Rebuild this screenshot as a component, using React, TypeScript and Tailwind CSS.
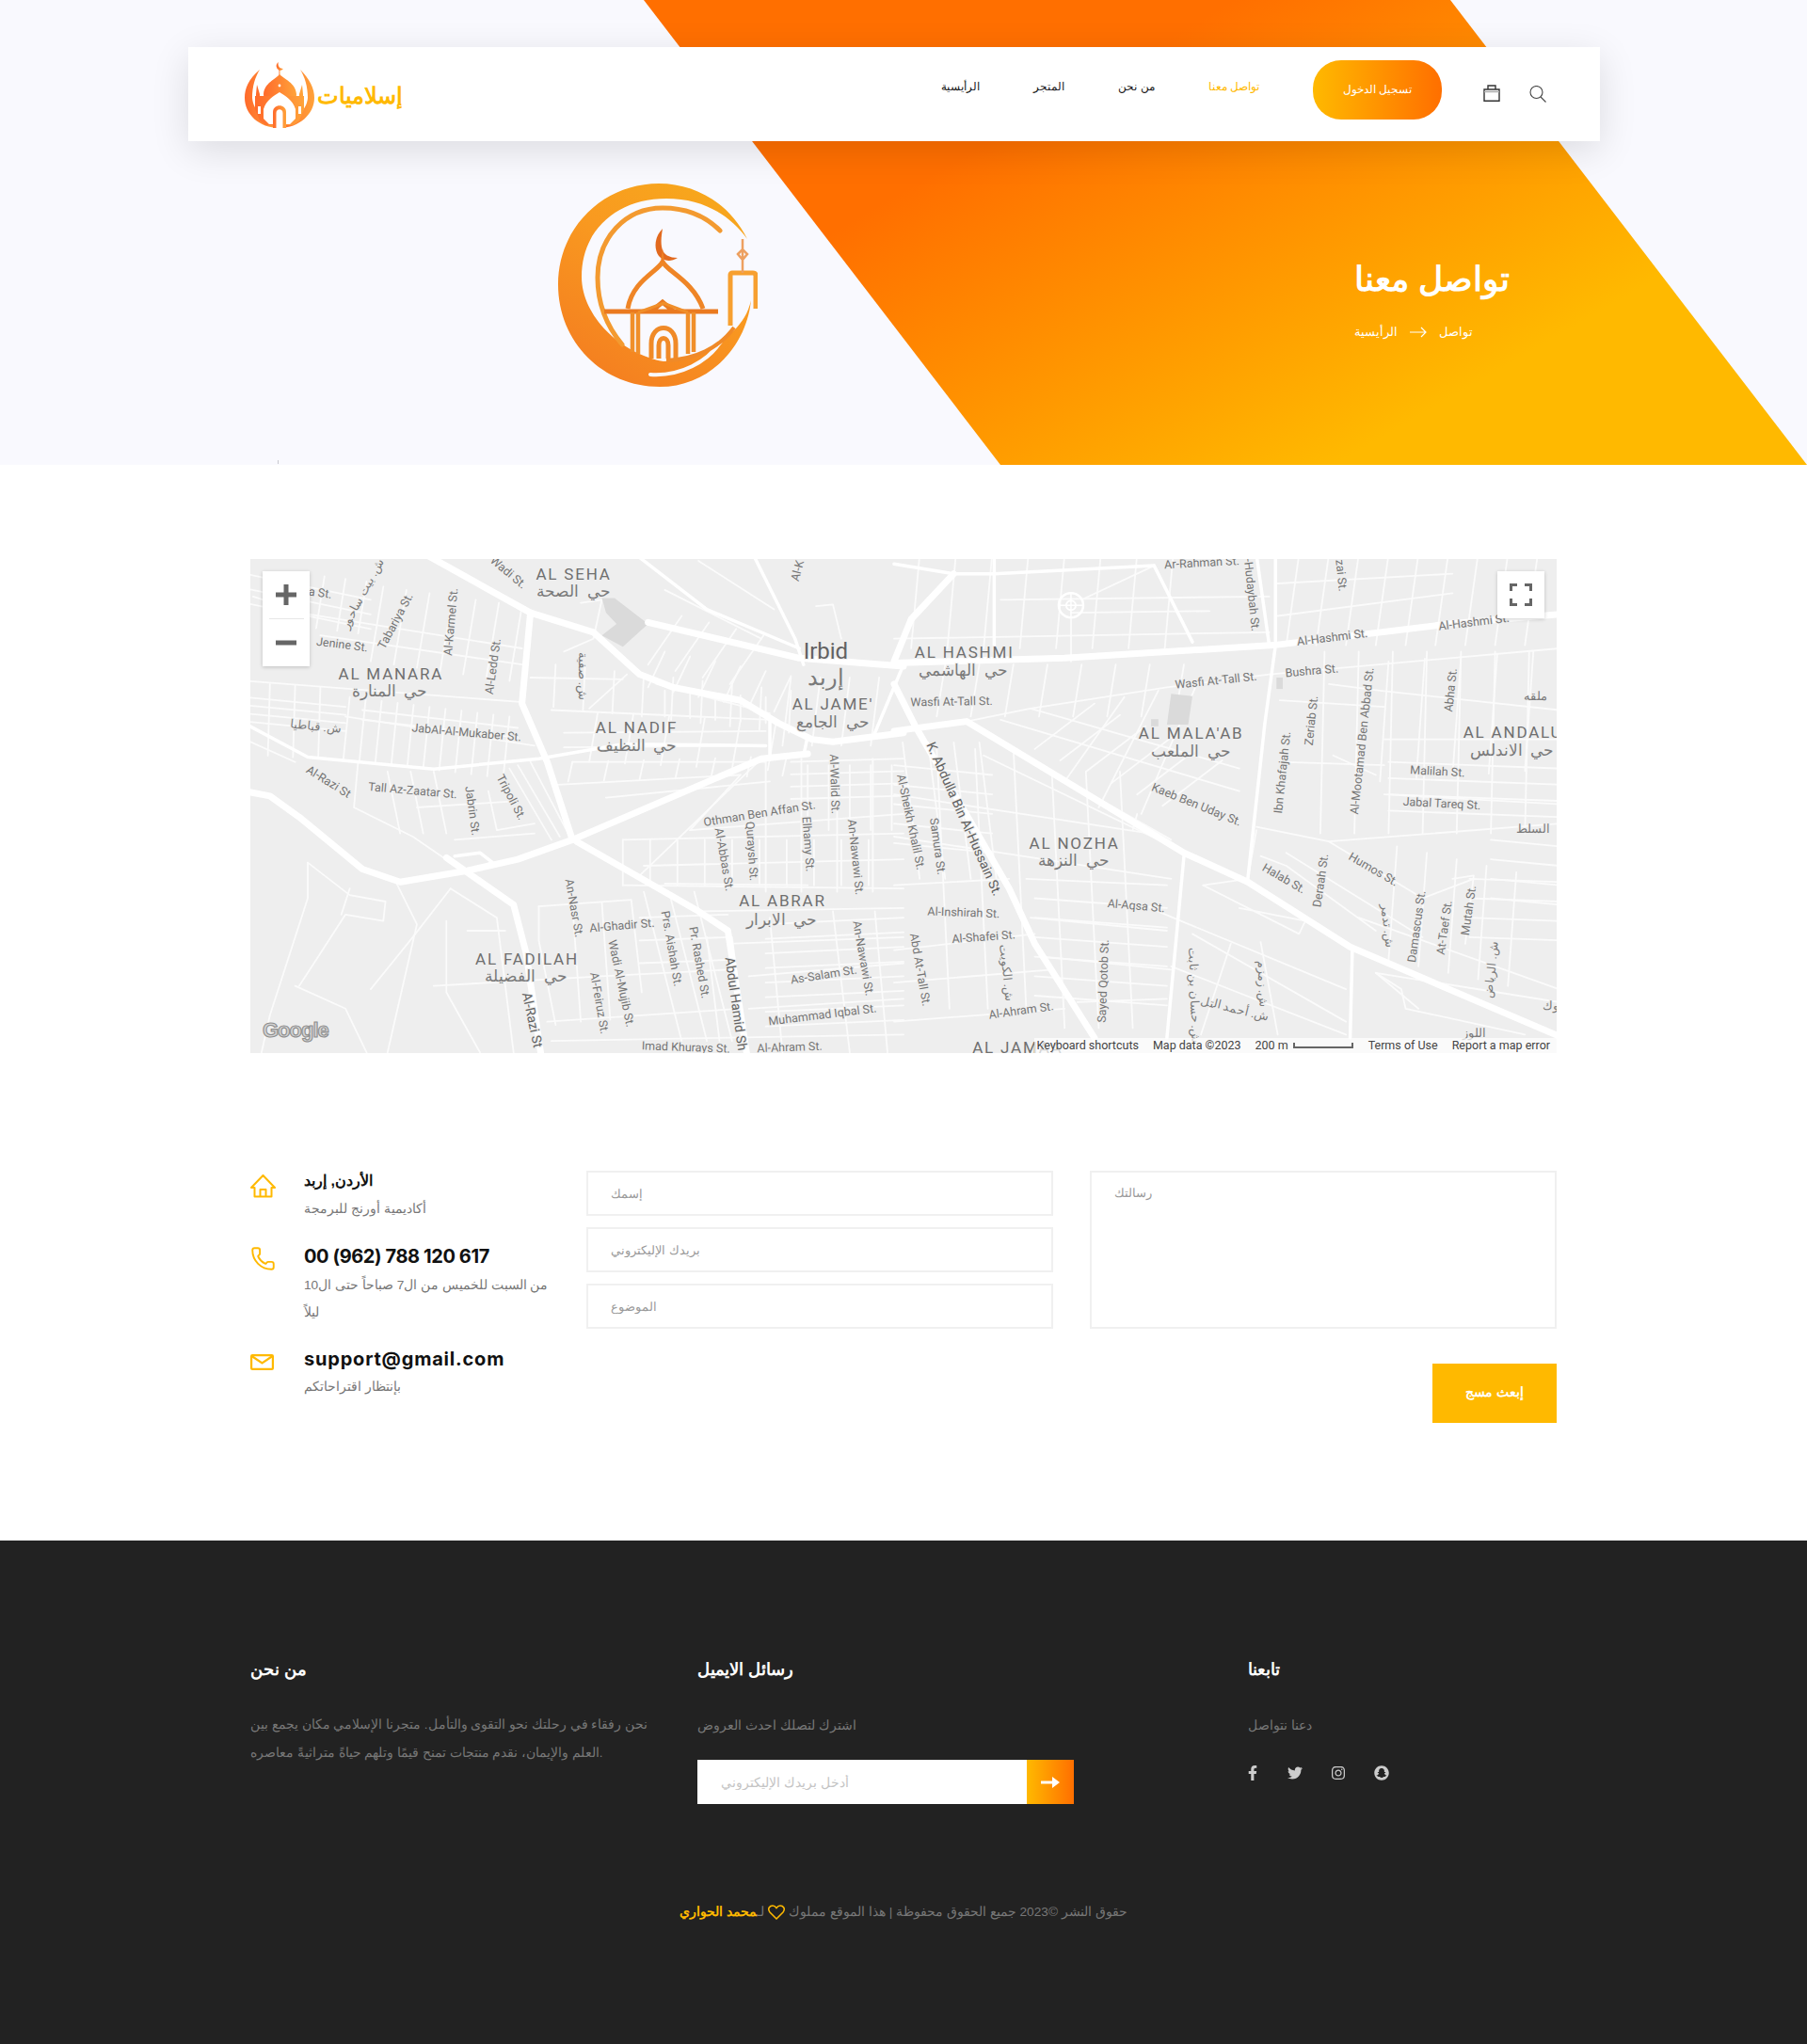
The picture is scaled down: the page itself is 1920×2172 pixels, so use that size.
import { Phone } from "lucide-react";
import { FaFacebookF, FaInstagram, FaSnapchat, FaTwitter } from "react-icons/fa";

type Conv = (x: number, y: number) => number[];

// the map is drawn from measurements taken on two crops, so keep a converter for each
const z3: Conv = (x, y) => [x / 2.24 - 6, y / 2.9 - 5];
const z4: Conv = (x, y) => [x / 2.208 + 684, y / 2.9 - 5];

const toPts = (s: string, f: Conv) =>
  s
    .split(" ")
    .map((p) => {
      const [x, y] = p.split(",").map(Number);
      return f(x, y)
        .map((n) => n.toFixed(1))
        .join(",");
    })
    .join(" ");

// n parallel streets
const hatch = (x0: number, y0: number, x1: number, y1: number, dx: number, dy: number, n: number) =>
  Array.from({ length: n }, (_, i) => `${x0 + dx * i},${y0 + dy * i} ${x1 + dx * i},${y1 + dy * i}`);

const MAJOR_3 = [
  "430,0 680,180 830,240 940,370 1020,410 1180,450 1270,520 1350,570 1400,578 1568,550",
  "680,180 660,460 720,640 780,880 1230,630 1340,615",
  "780,880 650,940 530,975 370,1010 280,970 130,810 60,745 0,730",
  "790,885 1080,1100 1150,1160 1195,1540",
  "480,935 640,1080 670,1230 705,1540",
  "960,210 1320,320 1568,345",
];
const MEDIUM_3 = [
  "1210,0 1310,260 1330,340",
  "930,0 1100,170 1320,290",
  "1340,560 1330,620",
  "1568,340 1500,550",
  "13,530 150,625 450,662 700,630 900,585 1240,590",
  "1250,500 1250,620",
  "500,930 560,920 590,950 540,975",
];
const MINOR_3 = [
  "0,390 655,455",
  "130,180 660,290",
  "180,250 660,340",
  "20,130 140,180",
  "240,500 690,590",
  "680,380 900,385",
  "730,480 1250,510",
  "780,640 1240,640",
  "745,710 1180,680",
  "860,750 1250,700",
  "900,1020 1568,1030",
  "1060,850 1568,800",
  "900,880 1568,860",
  "950,960 1568,940",
  "1000,1015 1340,1020",
  "1090,1100 1568,1090",
  "1150,1200 1568,1180",
  "1200,1300 1568,1260",
  "1200,1400 1568,1370",
  "700,1085 920,1065 945,1350",
  "700,1085 700,1190 740,1450",
  "720,1440 1180,1400",
  "450,1330 850,1300 1150,1280",
  "730,1500 1568,1480",
  "940,990 1230,630",
  "1060,850 1180,680",
  "360,1010 410,1140 340,1535",
  "150,950 250,1050 335,1070 330,1130 240,1110 130,1330",
  "150,950 150,1060 60,1420 40,1535",
  "120,1330 240,1400 290,1535",
  "250,1030 230,1110",
  "490,1030 400,1180 300,1340",
  "490,1030 600,1120 640,1535",
  "530,1160 620,1160",
  "480,1130 480,1350 560,1535",
  "910,370 820,475",
  "1250,1120 1280,1535",
  "1400,1100 1440,1535",
  "1500,1100 1530,1535",
  "0,570 120,640",
  "270,640 260,780 400,870 490,950",
  "580,730 600,850 690,830",
  "500,880 690,860",
  "410,780 650,760",
  "630,660 730,880",
  "650,650 750,870",
  "680,640 770,860",
  "1360,160 1400,155 1420,260",
  "980,400 1250,490",
  "760,300 830,260 850,140 800,150",
  "1000,110 1230,260",
  "1080,20 1260,170",
  ...hatch(0, 60, 300, 140, 0, 45, 3),
  ...hatch(280, 480, 650, 535, 0, 30, 2),
  ...hatch(0, 440, 240, 470, 0, 25, 4),
  ...hatch(140, 60, 120, 220, 50, 8, 4),
  ...hatch(330, 100, 300, 330, 55, 10, 7),
  ...hatch(250, 440, 235, 630, 38, 6, 11),
  ...hatch(60, 400, 55, 620, 60, 5, 3),
  ...hatch(740, 340, 735, 470, 70, 10, 9),
  ...hatch(840, 490, 820, 640, 85, 5, 6),
  ...hatch(780, 640, 770, 700, 85, -3, 7),
  ...hatch(340, 670, 370, 860, 55, 0, 3),
  ...hatch(900, 880, 900, 1020, 65, 0, 10),
  ...hatch(1300, 380, 1280, 590, 70, 0, 4),
  ...hatch(1040, 190, 960, 340, 65, 20, 4),
  ...hatch(1000, 420, 1000, 500, 60, 5, 5),
  ...hatch(780, 1080, 800, 1440, 70, -6, 2),
  ...hatch(950, 1040, 1040, 1500, 60, 0, 3),
  ...hatch(1240, 630, 1240, 1040, 85, 0, 4),
  ...hatch(1240, 1140, 1568, 1120, 0, 45, 8),
  ...hatch(1300, 640, 1568, 630, 0, 38, 4),
  ...hatch(760, 550, 1240, 545, 0, 45, 2),
  ...hatch(1000, 300, 960, 410, 60, 15, 6),
  ...hatch(1340, 650, 1340, 850, 50, 0, 5),
  ...hatch(1100, 1180, 1130, 1500, 60, 0, 2),
  ...hatch(940, 1120, 1150, 1110, 0, 70, 3),
];
const MAJOR_4 = [
  "0,335 400,320 890,280 1300,215 1560,185",
  "0,545 170,515 680,920 830,1010 1070,1210 1560,1485",
  "0,400 50,530 270,1030 330,1200 470,1490",
  "140,60 40,200 0,330",
];
const MEDIUM_4 = [
  "895,0 895,280 870,520 830,1000",
  "680,930 640,1490",
  "1075,1220 1070,1490",
  "235,0 235,300",
  "0,30 140,60 235,60 610,35",
  "610,35 700,270",
  "880,280 850,0",
];
const MINOR_4 = [
  "170,515 320,475 640,410 880,370 1560,290",
  "320,475 810,660",
  "250,510 810,730",
  "830,1000 725,1020",
  "850,840 1020,885 1240,1060 1360,1000",
  "1020,885 1560,830",
  "920,920 1240,1180",
  "860,930 920,960 1130,1160",
  "725,1020 950,1170 965,1130 810,1090",
  "600,1090 1060,1340",
  "700,1170 1060,1440",
  "650,1270 1060,1480",
  "790,1200 720,1480",
  "860,1195 900,1480",
  "1130,1290 1230,1400",
  "1130,1290 1190,1340 1200,1400 1480,1480",
  "610,35 440,140",
  "415,200 415,330",
  "415,180 740,175",
  "0,260 880,240",
  "250,140 880,130",
  "900,190 1310,120",
  "900,90 1310,60",
  "560,850 570,800",
  "540,440 400,700",
  "620,420 480,780",
  "710,400 580,800",
  "830,1000 850,850",
  "1150,570 1560,570",
  "1150,740 1560,770",
  "1020,400 1140,420 1560,480",
  "1030,620 1130,680",
  "1310,1000 1360,990 1340,1200",
  "0,870 250,920 650,1000",
  "0,740 300,800 600,860",
  "310,1000 640,1020",
  "320,1120 640,1160",
  "350,1240 650,1280",
  "0,1020 270,1000",
  "0,1220 330,1170",
  "0,1320 370,1280",
  "0,1440 400,1400",
  "430,1380 640,1370",
  "210,620 810,1000",
  "300,620 650,880",
  "905,450 1150,470",
  "905,640 1150,650",
  "1130,1290 1560,1380",
  "1090,1120 1560,1340",
  ...hatch(60, 0, 40, 290, 85, 0, 8),
  ...hatch(950, 0, 920, 280, 70, 0, 9),
  ...hatch(1010, 300, 1000, 860, 80, 0, 7),
  ...hatch(100, 600, 130, 1400, 90, 0, 3),
  ...hatch(370, 670, 400, 1460, 80, 0, 3),
  ...hatch(120, 340, 100, 500, 80, 0, 8),
  ...hatch(1180, 900, 1160, 1250, 70, 20, 5),
  ...hatch(1160, 640, 1560, 660, 0, 50, 4),
  ...hatch(1400, 880, 1560, 900, 0, 60, 4),
  ...hatch(1160, 330, 1140, 700, 85, -8, 5),
  ...hatch(20, 580, 60, 1000, 60, 0, 4),
  ...hatch(0, 650, 230, 680, 0, 60, 5),
  ...hatch(330, 1060, 640, 1090, 0, 60, 6),
  ...hatch(1350, 1000, 1560, 1010, 0, 60, 4),
  ...hatch(330, 600, 470, 460, 60, 35, 6),
];

type Label = [string, number, number, number?];

const AREAS_3: Label[] = [
  ["AL SEHA", 783, 60],
  ["حي  الصحة", 783, 112],
  ["AL MANARA", 348, 367],
  ["حي  المنارة", 345, 420],
  ["AL NADIF", 933, 533],
  ["حي  النظيف", 933, 588],
  ["AL JAME'", 1400, 462],
  ["حي  الجامع", 1400, 515],
  ["AL ABRAR", 1280, 1068],
  ["حي  الابرار", 1278, 1125],
  ["AL FADILAH", 672, 1248],
  ["حي  الفضيلة", 670, 1300],
];
const AREAS_4: Label[] = [
  ["AL HASHMI", 165, 303],
  ["حي  الهاشمي", 162, 357],
  ["AL MALA'AB", 697, 552],
  ["حي  الملعب", 697, 605],
  ["AL ANDALUS", 1465, 547],
  ["حي  الاندلس", 1450, 603],
  ["AL NOZHA", 423, 890],
  ["حي  النزهة", 422, 942],
  ["AL JAMAA", 290, 1520],
];
const STREETS_3: Label[] = [
  ["Wadi St.", 628, 55, 40],
  ["a St.", 180, 118, 8],
  ["ش. بيت ساحور", 280, 120, -62],
  ["Tabariya St.", 358, 205, -62],
  ["Al-Karmel St.", 490, 208, -85],
  ["Al-Ledd St.", 590, 345, -82],
  ["Jenine St.", 232, 277, 7],
  ["ش. صفية", 805, 375, 90],
  ["JabAl-Al-Mukaber St.", 528, 548, 5],
  ["ش. قباطيا", 170, 530, 6],
  ["Al-Razi St", 200, 700, 32],
  ["Tall Az-Zaatar St.", 400, 727, 5],
  ["Jabrin St.", 543, 790, 82],
  ["Tripoli St.", 635, 748, 62],
  ["Othman Ben Affan St.", 1225, 798, -9],
  ["Al-Abbas St.", 1142, 940, 80],
  ["Quraysh St.", 1208, 915, 86],
  ["Elhamy St.", 1342, 893, 86],
  ["Al-Walid St.", 1405, 708, 88],
  ["An-Nawawi St.", 1455, 933, 84],
  ["An-Nasr St.", 785, 1090, 80],
  ["Al-Ghadir St.", 898, 1143, -5],
  ["Wadi Al-Mujib St.", 897, 1322, 78],
  ["Al-Feiruz St.", 845, 1383, 80],
  ["Prs. Aishah St.", 1017, 1215, 80],
  ["Pr. Rashed St.", 1083, 1258, 80],
  ["As-Salam St.", 1378, 1295, -9],
  ["An-Nawawi St.", 1473, 1245, 80],
  ["Muhammad Iqbal St.", 1375, 1418, -7],
  ["Imad Khurays St.", 1050, 1518, 2],
  ["Al-Ahram St.", 1297, 1518, -2],
  ["Al-K", 1315, 50, -75],
];
const STREETS_4: Label[] = [
  ["Ar-Rahman St.", 722, 25, -3],
  ["-Hudaybah St.", 840, 125, 84],
  ["zai St.", 1050, 65, 84],
  ["Al-Hashmi St.", 1028, 255, -7],
  ["Al-Hashmi St.", 1360, 208, -7],
  ["Bushra St.", 980, 358, -5],
  ["Wasfi At-Tall St.", 755, 388, -6],
  ["Wasfi At-Tall St.", 135, 453, -1],
  ["Al-Mootamad Ben Abbad St.", 1097, 575, -84],
  ["Abha St.", 1305, 418, -84],
  ["ملقه", 1505, 437],
  ["Zeriab St.", 978, 512, -84],
  ["Ibn Khafajah St.", 910, 672, -84],
  ["Malilah St.", 1275, 668, 3],
  ["Jabal Tareq St.", 1285, 767, 3],
  ["Kaeb Ben Uday St.", 710, 770, 22],
  ["السلط", 1500, 845],
  ["Al-Sheikh Khalil St.", 40, 825, 78],
  ["Samura St.", 103, 900, 82],
  ["Al-Inshirah St.", 163, 1103, 2],
  ["Al-Aqsa St.", 568, 1082, 5],
  ["Al-Shafei St.", 210, 1178, -4],
  ["Abd At-Tall St.", 62, 1280, 80],
  ["ش. الكويت", 265, 1290, 84],
  ["Sayed Qotob St.", 490, 1315, -88],
  ["Al-Ahram St.", 298, 1405, -8],
  ["Halab St.", 915, 998, 30],
  ["Humos St.", 1125, 970, 30],
  ["Deraah St.", 1000, 1005, -82],
  ["Damascus St.", 1225, 1147, -82],
  ["At-Taef St.", 1290, 1150, -82],
  ["Mutah St.", 1347, 1097, -82],
  ["ش. تدمر", 1158, 1145, 84],
  ["ش. الرياض", 1400, 1280, -84],
  ["ش. حسان بن ثابت", 705, 1360, 88],
  ["ش. زمزم", 865, 1325, 88],
  ["ش. أحمد التل", 800, 1400, 14],
  ["اللوز", 1362, 1475],
  ["وك", 1540, 1390],
];

const isArabic = (t: string) => /[\u0600-\u06FF]/.test(t);

function MapLabels({ items, f, size, fill, spacing }: { items: Label[]; f: Conv; size: number; fill: string; spacing?: number }) {
  return (
    <>
      {items.map(([t, x, y, rot], i) => {
        const [mx, my] = f(x, y);
        const arabic = isArabic(t);
        return (
          <text
            key={i}
            x={mx}
            y={my}
            fontSize={size}
            fill={arabic ? "#7a7a7a" : fill}
            letterSpacing={arabic ? 0 : spacing ?? 0}
            textAnchor="middle"
            dominantBaseline="central"
            stroke="#eeeeee"
            strokeWidth={2}
            paintOrder="stroke"
            xmlSpace="preserve"
            transform={rot ? `rotate(${rot} ${mx} ${my})` : undefined}
          >
            {t}
          </text>
        );
      })}
    </>
  );
}

function Roads({ items, f, width, color = "#ffffff" }: { items: string[]; f: Conv; width: number; color?: string }) {
  return (
    <>
      {items.map((s, i) => (
        <polyline key={i} points={toPts(s, f)} fill="none" stroke={color} strokeWidth={width} strokeLinejoin="round" strokeLinecap="round" />
      ))}
    </>
  );
}

function Building({ points, f }: { points: string; f: Conv }) {
  return <polygon points={toPts(points, f)} fill="#dadada" />;
}

function MapView() {
  const [rx, ry] = z4(415, 157);
  return (
    <div className="relative h-[525px] w-full overflow-hidden bg-[#eeeeee]">
      <svg viewBox="0 0 1388 525" className="block h-full w-full font-['Roboto',sans-serif]">
        <Roads items={MINOR_3} f={z3} width={1.8} color="#fbfbfb" />
        <Roads items={MINOR_4} f={z4} width={1.8} color="#fbfbfb" />
        <Building points="850,135 880,135 960,215 900,285 850,250 885,215 860,180" f={z3} />
        <Building points="650,430 700,437 690,525 640,525" f={z4} />
        <Building points="897,380 912,380 912,415 897,415" f={z4} />
        <Building points="603,508 620,508 620,530 603,530" f={z4} />
        <circle cx={rx} cy={ry} r={13} fill="none" stroke="#fff" strokeWidth={2.500} />
        <circle cx={rx} cy={ry} r={5} fill="none" stroke="#fff" strokeWidth={2} />
        <path d={`M${rx - 13} ${ry}h26M${rx} ${ry - 13}v26`} stroke="#fff" strokeWidth={1.500} />
        <Roads items={MEDIUM_3} f={z3} width={3.5} />
        <Roads items={MEDIUM_4} f={z4} width={3.5} />
        <Roads items={MAJOR_3} f={z3} width={7} />
        <Roads items={MAJOR_4} f={z4} width={7} />

        <MapLabels items={STREETS_3} f={z3} size={12.5} fill="#757575" />
        <MapLabels items={STREETS_4} f={z4} size={12.5} fill="#757575" />
        <MapLabels items={[["Abdul Hamid Sh", 1170, 1385, 82], ["Al-Razi St", 685, 1435, 78]]} f={z3} size={14} fill="#616161" />
        <MapLabels items={[["K. Abdulla Bin Al-Hussain St.", 165, 815, 66]]} f={z4} size={14} fill="#616161" />
        <MapLabels items={AREAS_3} f={z3} size={17} fill="#6f6f6f" spacing={1.8} />
        <MapLabels items={AREAS_4} f={z4} size={17} fill="#6f6f6f" spacing={1.8} />
        <MapLabels items={[["Irbid", 1383, 298], ["إربد", 1383, 380]]} f={z3} size={24} fill="#616161" />

        <text x={13} y={508} fontFamily="Liberation Sans" fontWeight={700} fontSize={22} fill="#d2d2d2" stroke="#8e8e8e" strokeWidth={1.100} letterSpacing={-1}>
          Google
        </text>
      </svg>

      {/* zoom buttons */}
      <div className="absolute left-[13px] top-[13px] flex h-[101px] w-[50px] flex-col items-center bg-white shadow-[0_1px_4px_rgba(0,0,0,0.2)]">
        <button className="flex h-[50px] w-full items-center justify-center">
          <svg width="24" height="24" viewBox="0 0 24 24"><path d="M9.500 1h5v8.500H23v5h-8.500V23h-5v-8.500H1v-5h8.500z" fill="#666" /></svg>
        </button>
        <div className="h-px w-[37px] bg-[#e6e6e6]" />
        <button className="flex h-[50px] w-full items-center justify-center">
          <svg width="24" height="24" viewBox="0 0 24 24"><path d="M1 9.500h22v5H1z" fill="#666" /></svg>
        </button>
      </div>

      {/* fullscreen */}
      <button className="absolute right-[13px] top-[13px] flex h-[50px] w-[50px] items-center justify-center bg-white shadow-[0_1px_4px_rgba(0,0,0,0.2)]">
        <svg width="24" height="24" viewBox="0 0 24 24" fill="none" stroke="#666" strokeWidth="3">
          <path d="M1.500 8V1.500H8M16 1.500h6.500V8M22.500 16v6.500H16M8 22.500H1.500V16" />
        </svg>
      </button>

      {/* credits */}
      <div className="absolute bottom-0 right-0 flex h-[16px] items-center bg-white/70 pl-[2px] pr-[7px] font-['Roboto',sans-serif] text-[12.5px] whitespace-nowrap text-[#444]">
        <span>Keyboard shortcuts</span>
        <span className="ml-[15px]">Map data ©2023</span>
        <span className="ml-[15px]">200 m</span>
        <span className="ml-[5px] h-[6px] w-[64px] border-x-2 border-b-2 border-[#666]" />
        <span className="ml-[16px]">Terms of Use</span>
        <span className="ml-[15px]">Report a map error</span>
      </div>
    </div>
  );
}

function SmallLogo() {
  return (
    <svg width="74" height="70" viewBox="0 0 74 70">
      <defs>
        <linearGradient id="smallLogo" x1="0" x2="1" y1="0" y2="0">
          <stop offset="0" stopColor="#ff6a2b" />
          <stop offset="1" stopColor="#ffa33a" />
        </linearGradient>
      </defs>
      <g fill="url(#smallLogo)">
        <path d="M16 8C4 18 0 28 0 38c0 17 15 32 37 32C22 62 9 52 8 38 8 26 11 16 16 8z" />
        <path d="M59 8c10 10 15 20 15 30 0 17-16 32-37 32 15-8 29-18 30-32 0-12-3-22-8-30z" />
        <path d="M36 0a5 5 0 0 0 1 9 5 5 0 0 0 4-2 5 5 0 0 1-5-7z" />
        <path d="M36.500 8h1v6h-1z" />
        <path d="M37 13c-4 5-16 9-17 21 0 3 1 5 2 7h31c1-2 2-4 2-7-1-12-13-16-18-21z" />
        <path d="M13 24l3 10v2h-4v-2zM61 24l-3 10v2h4v-2z" />
        <path d="M11 36h52v14l-5 12-6 5H22l-6-5-5-12z" />
      </g>
      <path d="M20 60V50c3-10 11-14 17-18 6 4 14 8 17 18v10l-6 6H26z" fill="#fff" />
      <path d="M30 70V53c0-9 14-9 14 0v17z" fill="url(#smallLogo)" />
      <path d="M33.500 70V54c0-5 7-5 7 0v16z" fill="#fff" />
      <circle cx="37" cy="25" r="1.400" fill="#fff" />
      <path d="M14 47h3v8h-3zM57 47h3v8h-3z" fill="#fff" />
    </svg>
  );
}

function BigLogo() {
  const bg = "#f9f9fe";
  return (
    <svg width="212" height="218" viewBox="0 0 212 218" fill="none" className="shrink-0">
      <defs>
        <linearGradient id="bigLogo" x1="0.2" x2="0.8" y1="1" y2="0">
          <stop offset="0" stopColor="#f47d20" />
          <stop offset="0.6" stopColor="#f99a20" />
          <stop offset="1" stopColor="#f7a81c" />
        </linearGradient>
      </defs>
      <path
        d="M201 60C182 22 146 1 107 1 48 1 0 48 0 108c0 62 48 109 108 109 52 0 92-42 97-92-3 14-10 24-18 32-22 22-50 32-75 33-45-8-87-48-87-90 0-50 38-83 90-83 36 0 66 15 86 43z"
        fill="url(#bigLogo)"
      />
      <path d="M98 204c30 2 62-12 78-40" stroke={bg} strokeWidth="4" strokeLinecap="round" />
      <path d="M172 51c-16-16-38-24-61-24-40 0-69 32-69 74 0 28 10 52 26 71" stroke="#f39a30" strokeWidth="5" strokeLinecap="round" />
      <path d="M187 154c-16 22-42 34-72 35" stroke="#f08a28" strokeWidth="4" />
      {/* moon */}
      <path d="M111 49c-8 8-10 20-4 29 4 5 12 7 20 2-8 0-16-3-17-12-1-6 0-13 1-19z" fill="#e2691e" />
      <path d="M111 84c-4 10-32 20-37 50M111 84c4 10 32 20 43 50" stroke="#ef8526" strokeWidth="5" />
      <path d="M111 70l-2 14h4z" fill="#ef7f22" />
      {/* base */}
      <path d="M49 137h74l-12-10-12 10M123 137h47" stroke="#ea7a20" strokeWidth="5" />
      <path d="M79 138v42M85 138v44M138 138v44M144 138v42" stroke="#f08f2a" strokeWidth="4.500" />
      <path d="M99 187v-16c0-22 26-22 26 0v16M107 187v-14c0-10 10-10 10 0v14" stroke="#f08a28" strokeWidth="5" />
      <path d="M85 138l27-10 26 10" stroke="#f08f2a" strokeWidth="3" />
      <path d="M183 152V98c0-1 1-2 2-2h22c2 0 3 1 3 3v35" stroke="#f7a030" strokeWidth="5" />
      <path d="M196 60v36M191 76l5-5 5 5-5 6z" stroke="#eda060" strokeWidth="2.500" />
    </svg>
  );
}

const NAV_ITEMS = ["الرأيسية", "المتجر", "من نحن"];

function Header() {
  return (
    <header className="relative z-10 ml-[200px] mt-[50px] flex h-[100px] w-[1500px] items-start bg-white pl-[60px] shadow-[0_10px_40px_rgba(0,0,0,0.12)]">
      <div className="mt-[16px] flex items-center">
        <SmallLogo />
        <span className="ml-[3px] mt-[2px] text-[24px] font-bold leading-none text-[#ffb900]">إسلاميات</span>
      </div>
      <nav className="ml-auto mt-[14px] flex items-start">
        <ul className="mt-[18px] flex gap-[57px] text-[12px] leading-5 tracking-[-0.5px] text-[#222]">
          {NAV_ITEMS.map((item) => (
            <li key={item} className="whitespace-nowrap">
              {item}
            </li>
          ))}
          <li className="whitespace-nowrap text-[#ffb900]">تواصل معنا</li>
        </ul>
        <a className="ml-[57px] flex h-[63px] w-[137px] items-center justify-center rounded-[30px] bg-[linear-gradient(90deg,#ffb900,#ff6f00)] text-[11.5px] text-white">
          تسجيل الدخول
        </a>
        <svg className="ml-[44px] mt-[26px]" width="18" height="18" viewBox="0 0 18 18" fill="none" stroke="#333" strokeWidth="1.400">
          <path d="M1 5h16v12.300H1zM5 5V1h8v4" />
          <path d="M1 7.500h16" stroke="#aaa" />
        </svg>
        <svg className="ml-[31px] mr-[57px] mt-[27px]" width="18" height="18" viewBox="0 0 18 18" fill="none" stroke="#444" strokeWidth="1.100">
          <circle cx="7.500" cy="7" r="6.500" />
          <path d="M12 12l5.500 5.500" />
        </svg>
      </nav>
    </header>
  );
}

function Hero() {
  return (
    <section className="relative h-[494px] overflow-hidden bg-[#f9f9fe]">
      <div className="absolute inset-y-0 left-[684px] w-[1236px] bg-[linear-gradient(150deg,#ff6f00_30%,#ffb900_76%)] [clip-path:polygon(0_0,857px_0,100%_100%,379px_100%)]" />
      <Header />
      <div className="relative flex pl-[593px] pt-[44px]">
        <BigLogo />
        <div className="ml-[634px] mt-[79px] text-white">
          <h1 className="text-[36px] font-bold leading-[48px]">تواصل معنا</h1>
          <div className="mt-[20px] flex items-center gap-[13px] text-[13px] leading-6">
            <span>الرأيسية</span>
            <svg width="18" height="12" viewBox="0 0 18 12" fill="none" stroke="#fff" strokeWidth="1.200">
              <path d="M0 6h17M12 1l5 5-5 5" />
            </svg>
            <span>تواصل</span>
          </div>
        </div>
      </div>
      <span className="absolute left-[295px] top-[489px] h-[4px] w-[1px] bg-[#c9c9cf]" />
    </section>
  );
}

const fieldClass =
  "w-full border-2 border-[#f0f0f0] bg-white px-[24px] text-[13px] text-[#333] outline-none placeholder:text-[#9a9a9a]";

function ContactInfo() {
  return (
    <div className="w-[327px] shrink-0">
      <div className="flex">
        <svg className="mt-[4px] w-[27px] shrink-0" height="25" viewBox="0 0 27 25" fill="none" stroke="#ffb900" strokeWidth="2" strokeLinejoin="round">
          <path d="M1 14L13.500 1 26 14h-3.500v9.500h-18V14zM10.500 23.500V16h6v7.500" />
        </svg>
        <div className="ml-[30px]">
          <h4 className="text-[16px] font-bold leading-[22px] text-[#111]">الأردن, إربد</h4>
          <p className="mt-[4px] text-[14px] leading-[29px] text-[#777]">أكاديمية أورنج للبرمجة</p>
        </div>
      </div>
      <div className="mt-[22px] flex">
        <Phone className="mt-[3px] h-[27px] w-[27px] shrink-0 text-[#ffb900]" strokeWidth={1.700} />
        <div className="ml-[30px]">
          <h4 className="font-['Inter',sans-serif] text-[20px] font-bold leading-[28px] tracking-[-0.4px] text-[#111]">00 (962) 788 120 617</h4>
          <p className="mt-[3px] w-[270px] text-[13.700px] leading-[28.500px] text-[#777]">
            من السبت للخميس من ال7 صباحاً حتى ال10 ليلاً
          </p>
        </div>
      </div>
      <div className="mt-[21px] flex">
        <svg className="mt-[9px] w-[25px] shrink-0" height="17" viewBox="0 0 25 17" fill="none" stroke="#ffb900" strokeWidth="2.200">
          <rect x="1.100" y="1.100" width="22.800" height="14.800" rx="1" />
          <path d="M1.500 2l11 7.500L23.500 2" />
        </svg>
        <div className="ml-[32px]">
          <h4 className="font-['Inter',sans-serif] text-[20px] font-bold leading-[28px] tracking-[0.8px] text-[#111]">support@gmail.com</h4>
          <p className="mt-[1px] text-[14px] leading-[29px] text-[#777]">بإنتظار اقتراحاتكم</p>
        </div>
      </div>
    </div>
  );
}

function ContactForm() {
  return (
    <form className="ml-[30px] flex-1">
      <div className="flex gap-[39px]">
        <div className="flex w-[496px] flex-col gap-[12px]">
          <input className={`${fieldClass} h-[48px]`} placeholder="إسمك" />
          <input className={`${fieldClass} h-[48px]`} placeholder="بريدك الإليكتروني" />
          <input className={`${fieldClass} h-[48px]`} placeholder="الموضوع" />
        </div>
        <textarea className={`${fieldClass} h-[168px] flex-1 resize-none py-[12px]`} placeholder="رسالتك" />
      </div>
      <div className="mt-[37px] flex justify-end">
        <button type="button" className="h-[63px] w-[132px] bg-[#ffb900] text-[13.500px] font-bold text-white">
          إبعث مسج
        </button>
      </div>
    </form>
  );
}

function Footer() {
  return (
    <footer className="h-[535px] bg-[#222222] pt-[123px]">
      <div className="mx-auto flex w-[1388px]">
        <div className="w-[475px]">
          <h3 className="text-[18px] font-bold leading-7 text-white">من نحن</h3>
          <p className="mt-[30px] w-[425px] text-[13.500px] leading-[30px] text-[#777]">
            نحن رفقاء في رحلتك نحو التقوى والتأمل. متجرنا الإسلامي مكان يجمع بين العلم والإيمان، نقدم منتجات تمنح قيمًا وتلهم حياةً متراثيةً معاصره.
          </p>
        </div>
        <div className="w-[585px]">
          <h3 className="text-[18px] font-bold leading-7 text-white">رسائل الايميل</h3>
          <p className="mt-[30px] text-[14px] leading-[30px] text-[#777]">اشترك لتصلك احدث العروض</p>
          <div className="mt-[22px] flex h-[47px] w-[400px]">
            <input className="h-full w-[350px] bg-white px-[25px] text-[14px] outline-none placeholder:text-[#c4c4c4]" placeholder="أدخل بريدك الإليكتروني" />
            <button className="flex h-full w-[50px] items-center justify-center bg-[linear-gradient(90deg,#ffb900,#ff6f00)]">
              <svg width="20" height="12" viewBox="0 0 20 12" fill="#fff"><path d="M0 4.500h12V0l8 6-8 6V7.500H0z" /></svg>
            </button>
          </div>
        </div>
        <div className="flex-1">
          <h3 className="text-[18px] font-bold leading-7 text-white">تابعنا</h3>
          <p className="mt-[30px] text-[14px] leading-[30px] text-[#777]">دعنا نتواصل</p>
          <div className="mt-[28px] flex items-center text-[16px] text-[#cccccc]">
            <FaFacebookF className="w-[10px]" />
            <FaTwitter className="ml-[32px]" />
            <FaInstagram className="ml-[30px]" />
            <FaSnapchat className="ml-[30px]" />
          </div>
        </div>
      </div>
      <p dir="rtl" className="mt-[103px] flex items-center justify-center gap-[4px] text-[13.700px] leading-6 text-[#777]">
        <span>حقوق النشر ©2023 جميع الحقوق محفوظة | هذا الموقع مملوك</span>
        <svg width="18" height="16" viewBox="0 0 18 16" fill="none" stroke="#ffb900" strokeWidth="1.500">
          <path d="M9 15L2 8C-1 4 2 1 5 1c2 0 3 1 4 2.500C10 2 11 1 13 1c3 0 6 3 3 7z" />
        </svg>
        <span>
          لـ<span className="font-bold text-[#ffb900]">محمد الحواري</span>
        </span>
      </p>
    </footer>
  );
}

export default function App() {
  return (
    <main className="bg-white font-['Liberation_Sans',sans-serif]">
      <Hero />
      <section className="mx-auto w-[1388px] pb-[125px] pt-[100px]">
        <MapView />
        <div className="mt-[125px] flex">
          <ContactInfo />
          <ContactForm />
        </div>
      </section>
      <Footer />
    </main>
  );
}
